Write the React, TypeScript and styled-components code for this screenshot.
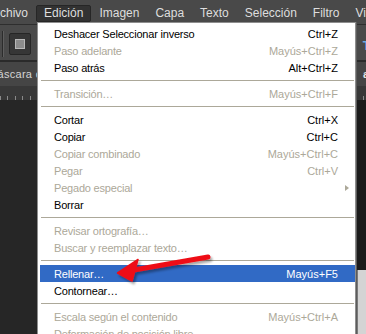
import React from 'react';
import styled, { createGlobalStyle } from 'styled-components';

const Global = createGlobalStyle`
  html, body { margin: 0; padding: 0; background: #282828; }
  body { font-family: "Liberation Sans", Arial, sans-serif; }
`;

const Screen = styled.div`
  position: relative;
  width: 366px;
  height: 334px;
  overflow: hidden;
  background: #272727;
  display: flex;
  flex-direction: column;
  font-family: "Liberation Sans", Arial, sans-serif;
`;

const MenuBar = styled.div`
  flex: none;
  height: 24px;
  background: #494949;
  display: flex;
  align-items: flex-start;
`;

const MenuBarItem = styled.div<{ $open?: boolean }>`
  margin-top: 5px;
  height: 17px;
  box-sizing: border-box;
  padding: 0 7px;
  line-height: 15px;
  font-size: 12px;
  color: #dedede;
  white-space: nowrap;
  border-radius: 2px;
  border: 1px solid ${(p) => (p.$open ? '#262626' : 'transparent')};
  background: ${(p) => (p.$open ? '#323232' : 'transparent')};
  &:first-child { margin-left: -20px; }
`;

const OptionsBar = styled.div`
  flex: none;
  height: 36px;
  box-sizing: border-box;
  background: #4a4a4a;
  border-top: 1px solid #2e2e2e;
  display: flex;
  align-items: flex-start;
  padding: 6px 0 0 2px;
`;

const BarDivider = styled.div`
  width: 1px;
  height: 26px;
  background: #2c2c2c;
  border-right: 1px solid #5e5e5e;
`;

const ToolButton = styled.div`
  margin: 2px 0 0 5px;
  width: 22px;
  height: 22px;
  box-sizing: border-box;
  border: 1px solid #262626;
  border-radius: 2px;
  background: #363636;
  display: flex;
  align-items: center;
  justify-content: center;
`;

const Swatch = styled.div`
  width: 10px;
  height: 10px;
  box-sizing: border-box;
  background: #8c8c8c;
  border: 1px solid #b8b8b8;
`;

const Spacer = styled.div`
  flex: 1;
`;

const TypeGlyph = styled.span`
  margin: 9px -4px 0 0;
  font-size: 12px;
  font-weight: bold;
  color: #6aa9e6;
  line-height: 12px;
`;

const TabRow = styled.div`
  flex: none;
  height: 26px;
  box-sizing: border-box;
  background: #454545;
  border-top: 2px solid #2a2a2a;
  display: flex;
  align-items: center;
`;

const TabTitle = styled.span`
  margin-left: -12px;
  font-size: 11px;
  letter-spacing: 0.3px;
  color: #d4d4d4;
  white-space: nowrap;
`;

const PanelTab = styled.span`
  margin-right: -3px;
  font-size: 11px;
  font-weight: bold;
  color: #e6e6e6;
`;

const Ruler = styled.div`
  flex: none;
  height: 14px;
  background-color: #383838;
  background-image: repeating-linear-gradient(to right, #8a8a8a 0 1px, transparent 1px 7.4px);
  background-size: 100% 4px;
  background-position: 0 100%;
  background-repeat: no-repeat;
`;

const Canvas = styled.div`
  flex: 1;
  position: relative;
  background: #262626;
`;

const DarkGutter = styled.div`
  position: absolute;
  left: 357px;
  top: 0;
  right: 0;
  height: 170px;
  background: #1b1b1b;
`;

const DocumentEdge = styled.div`
  position: absolute;
  left: 357px;
  top: 170px;
  right: 0;
  bottom: 0;
  background: #d4d4d4;
  border-left: 1px solid #7a7a7a;
`;

const Menu = styled.div`
  position: absolute;
  left: 37px;
  top: 22px;
  width: 319px;
  height: 330px;
  box-sizing: border-box;
  background: #ffffff;
  border: 1px solid #8e8e8e;
  box-shadow: 1px 0 0 #5c5c5c;
  padding: 2px 0 0 2px;
  display: flex;
  flex-direction: column;
`;

const Row = styled.div<{ $disabled?: boolean; $active?: boolean }>`
  flex: none;
  height: 17px;
  display: flex;
  align-items: center;
  padding: 0 17px 0 14px;
  font-size: 11px;
  white-space: nowrap;
  color: ${(p) => (p.$active ? '#ffffff' : p.$disabled ? '#aca899' : '#000000')};
  background: ${(p) => (p.$active ? '#316ac5' : 'transparent')};
`;

const Label = styled.span`
  flex: 1;
  letter-spacing: -0.2px;
`;

const Shortcut = styled.span``;

const SubArrow = styled.span`
  width: 0;
  height: 0;
  margin-right: -11px;
  border-top: 3.5px solid transparent;
  border-bottom: 3.5px solid transparent;
  border-left: 4px solid #aca899;
`;

const Separator = styled.div`
  flex: none;
  height: 9px;
  position: relative;
  &::after {
    content: '';
    position: absolute;
    left: 1px;
    right: 1px;
    top: 4px;
    height: 1px;
    background: #aca899;
  }
`;

const Overlay = styled.svg`
  position: absolute;
  left: 0;
  top: 0;
  pointer-events: none;
`;

type Entry =
  | { sep: true }
  | { label: string; sc?: string; disabled?: boolean; active?: boolean; sub?: boolean };

const entries: Entry[] = [
  { label: 'Deshacer Seleccionar inverso', sc: 'Ctrl+Z' },
  { label: 'Paso adelante', sc: 'Mayús+Ctrl+Z', disabled: true },
  { label: 'Paso atrás', sc: 'Alt+Ctrl+Z' },
  { sep: true },
  { label: 'Transición…', sc: 'Mayús+Ctrl+F', disabled: true },
  { sep: true },
  { label: 'Cortar', sc: 'Ctrl+X' },
  { label: 'Copiar', sc: 'Ctrl+C' },
  { label: 'Copiar combinado', sc: 'Mayús+Ctrl+C', disabled: true },
  { label: 'Pegar', sc: 'Ctrl+V', disabled: true },
  { label: 'Pegado especial', disabled: true, sub: true },
  { label: 'Borrar' },
  { sep: true },
  { label: 'Revisar ortografía…', disabled: true },
  { label: 'Buscar y reemplazar texto…', disabled: true },
  { sep: true },
  { label: 'Rellenar…', sc: 'Mayús+F5', active: true },
  { label: 'Contornear…' },
  { sep: true },
  { label: 'Escala según el contenido', sc: 'Mayús+Ctrl+A', disabled: true },
  { label: 'Deformación de posición libre', disabled: true },
];

const menus = ['Archivo', 'Edición', 'Imagen', 'Capa', 'Texto', 'Selección', 'Filtro', 'Vista'];

export default function App() {
  return (
    <Screen>
      <Global />
      <MenuBar>
        {menus.map((m) => (
          <MenuBarItem key={m} $open={m === 'Edición'}>
            {m}
          </MenuBarItem>
        ))}
      </MenuBar>
      <OptionsBar>
        <BarDivider />
        <ToolButton>
          <Swatch />
        </ToolButton>
        <Spacer />
        <TypeGlyph>T</TypeGlyph>
      </OptionsBar>
      <TabRow>
        <TabTitle>máscara de capa/8) *</TabTitle>
        <Spacer />
        <PanelTab>a</PanelTab>
      </TabRow>
      <Ruler />
      <Canvas>
        <DarkGutter />
        <DocumentEdge />
      </Canvas>

      <Menu>
        {entries.map((e, i) =>
          'sep' in e ? (
            <Separator key={i} />
          ) : (
            <Row key={i} $disabled={e.disabled} $active={e.active}>
              <Label>{e.label}</Label>
              {e.sc && <Shortcut>{e.sc}</Shortcut>}
              {e.sub && <SubArrow />}
            </Row>
          )
        )}
      </Menu>

      <Overlay width={366} height={334} viewBox="0 0 366 334">
        <defs>
          <filter id="sh" x="-20%" y="-50%" width="140%" height="200%">
            <feDropShadow dx="2" dy="2.5" stdDeviation="1.2" floodColor="#000" floodOpacity="0.35" />
          </filter>
        </defs>
        <g filter="url(#sh)" fill="#ee1016" stroke="#ee1016">
          <line x1="208" y1="257" x2="131" y2="270.5" strokeWidth="5" strokeLinecap="round" />
          <polygon points="117.5,273 138,259.5 132,281" strokeWidth="1.5" strokeLinejoin="round" />
        </g>
      </Overlay>
    </Screen>
  );
}
